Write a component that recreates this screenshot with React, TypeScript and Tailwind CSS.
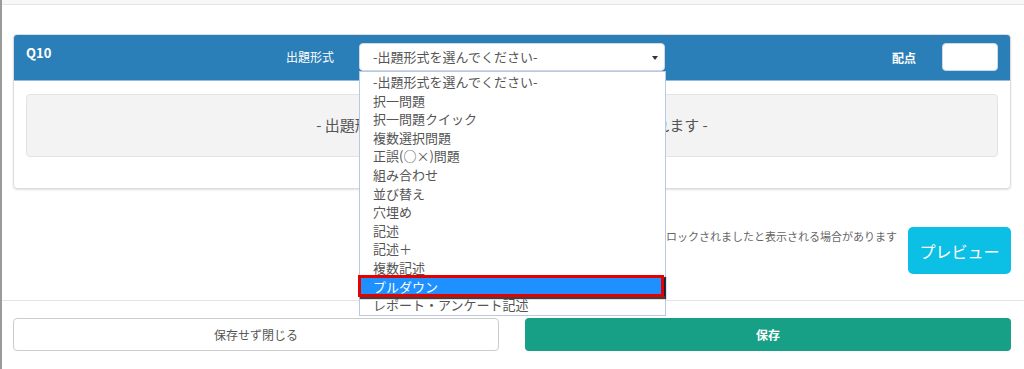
import React from "react";

const OPTIONS = [
  "-出題形式を選んでください-",
  "択一問題",
  "択一問題クイック",
  "複数選択問題",
  "正誤(○×)問題",
  "組み合わせ",
  "並び替え",
  "穴埋め",
  "記述",
  "記述＋",
  "複数記述",
  "プルダウン",
  "レポート・アンケート記述",
];

const SELECTED = "プルダウン";

function TypeSelect() {
  return (
    <div className="relative mt-[8px] w-[306px] self-start">
      {/* Closed select */}
      <div className="flex h-[28px] items-center justify-between rounded-[4px] border border-[#cfd8e3] bg-white pl-[13px] pr-[6px] text-[13px] text-[#555]">
        <span>-出題形式を選んでください-</span>
        <svg viewBox="0 0 6 4" width="6" height="4" className="mt-[1px]">
          <path d="M0 0h6L3 4z" fill="#333" />
        </svg>
      </div>

      {/* Open option list */}
      <div className="absolute left-0 top-full z-10 w-[307px] border border-[#b8c8e6] bg-white pt-[1px]">
        {OPTIONS.map((o) =>
          o === SELECTED ? (
            <div
              key={o}
              className="relative h-[18.6px] bg-[#1e90ff] pl-[13px] text-[13px] leading-[18.6px] text-white"
            >
              {o}
              <span className="absolute -left-[2px] -top-[3px] -bottom-[1px] right-[1px] border-[3px] border-[#e60000] shadow-[2px_2px_1px_rgba(0,0,0,0.75)]" />
            </div>
          ) : (
            <div key={o} className="h-[18.6px] pl-[13px] text-[13px] leading-[18.6px] text-[#555]">
              {o}
            </div>
          )
        )}
      </div>
    </div>
  );
}

export default function App() {
  return (
    <div className="relative h-[369px] w-[1024px] overflow-hidden border-l-2 border-[#9a9a9a] bg-white font-['Noto_Sans_CJK_JP','Noto_Sans',sans-serif]">
      <div className="h-[5px] border-b border-[#e6e6e6] bg-[#f7f7f7]" />

      <div className="pl-[11px] pr-[13px] pt-[29px]">
        {/* Question card */}
        <div className="rounded-[4px] border border-[#dcdcdc] shadow-[0_1px_2px_rgba(0,0,0,0.12)]">
          <div className="flex h-[46px] rounded-t-[3px] border-b border-[#8fbbe0] bg-[#2a7fb8] px-[12px]">
            <div className="w-[260px] pt-[8px] text-[13px] font-bold text-white">Q10</div>
            <div className="mr-[25px] mt-[13px] text-[12px] text-white">出題形式</div>
            <TypeSelect />
            <div className="flex-1" />
            <div className="mr-[26px] mt-[14px] text-[12px] font-bold text-white">配点</div>
            <div className="mt-[8px] h-[28px] w-[56px] self-start rounded-[4px] border border-[#cfd8e3] bg-white" />
          </div>
          <div className="px-[12px] pb-[31px] pt-[13px]">
            <div className="flex h-[63px] items-center justify-center rounded-[4px] border border-[#e3e3e3] bg-[#f3f3f3] text-[15px] text-[#555]">
              - 出題形式を選択すると、問題の編集画面が表示されます -
            </div>
          </div>
        </div>

        {/* Preview row */}
        <div className="mt-[38px] flex items-start justify-end">
          <div className="mr-[11px] mt-[1px] whitespace-nowrap text-[11px] text-[#666]">
            ※ブラウザの設定によってはポップアップがブロックされましたと表示される場合があります
          </div>
          <button className="h-[47px] w-[103px] rounded-[5px] bg-[#0cbfe4] text-[16px] text-white">
            プレビュー
          </button>
        </div>
      </div>

      <div className="mt-[26px] border-t border-[#e3e3e3]" />

      <div className="grid grid-cols-2 gap-[26px] pl-[11px] pr-[13px] pt-[17px]">
        <button className="h-[33px] rounded-[4px] border border-[#cccccc] bg-white text-[12px] text-[#555]">
          保存せず閉じる
        </button>
        <button className="h-[33px] rounded-[4px] bg-[#17a085] text-[12px] font-bold text-white">
          保存
        </button>
      </div>
    </div>
  );
}
